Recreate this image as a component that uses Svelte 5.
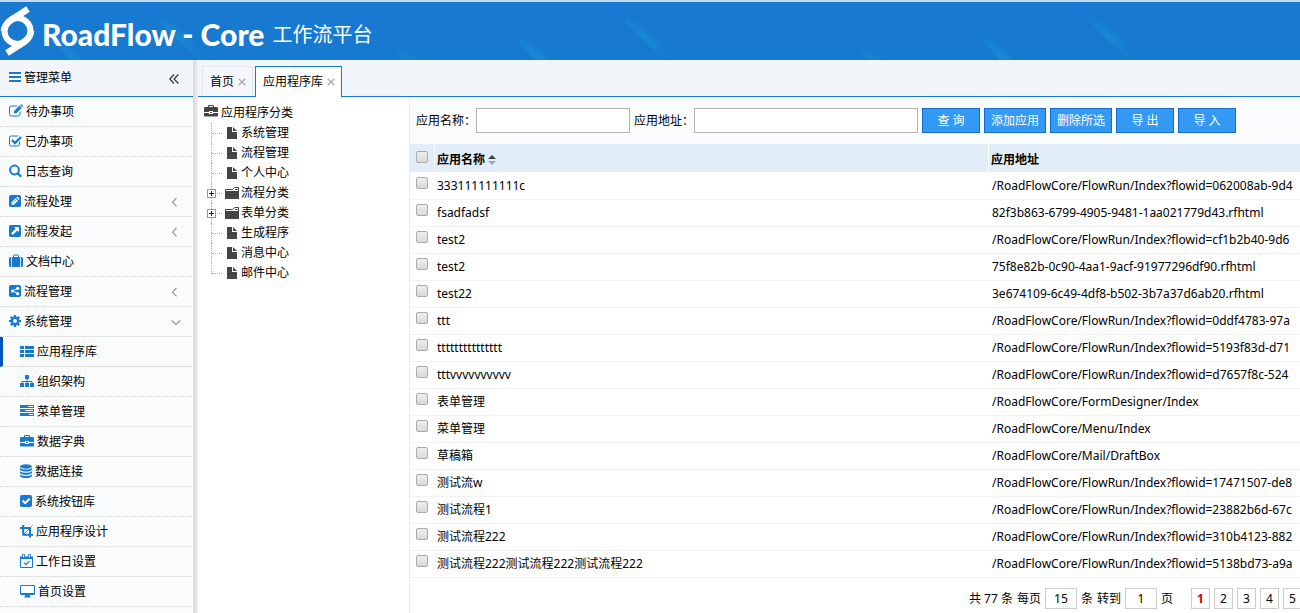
<script lang="ts">
  interface MenuItem {
    label: string;
    icon: string;
    width: number;
    arrow?: 'left' | 'down';
    child?: boolean;
    active?: boolean;
  }

  interface TreeNode {
    label: string;
    folder?: boolean;
  }

  interface AppRow {
    name: string;
    address: string;
  }

  const menu: MenuItem[] = [
    { label: '待办事项', icon: 'edit', width: 14 },
    { label: '已办事项', icon: 'checkOutline', width: 13 },
    { label: '日志查询', icon: 'search', width: 13 },
    { label: '流程处理', icon: 'pencilSquare', width: 12, arrow: 'left' },
    { label: '流程发起', icon: 'arrowSquare', width: 12, arrow: 'left' },
    { label: '文档中心', icon: 'suitcase', width: 14 },
    { label: '流程管理', icon: 'shareSquare', width: 12, arrow: 'left' },
    { label: '系统管理', icon: 'cog', width: 12, arrow: 'down' },
    { label: '应用程序库', icon: 'list', width: 14, child: true, active: true },
    { label: '组织架构', icon: 'sitemap', width: 14, child: true },
    { label: '菜单管理', icon: 'server', width: 14, child: true },
    { label: '数据字典', icon: 'briefcase', width: 14, child: true },
    { label: '数据连接', icon: 'database', width: 12, child: true },
    { label: '系统按钮库', icon: 'checkSquare', width: 12, child: true },
    { label: '应用程序设计', icon: 'crop', width: 13, child: true },
    { label: '工作日设置', icon: 'calendar', width: 13, child: true },
    { label: '首页设置', icon: 'desktop', width: 15, child: true }
  ];

  const tree: TreeNode[] = [
    { label: '系统管理' },
    { label: '流程管理' },
    { label: '个人中心' },
    { label: '流程分类', folder: true },
    { label: '表单分类', folder: true },
    { label: '生成程序' },
    { label: '消息中心' },
    { label: '邮件中心' }
  ];

  const rows: AppRow[] = [
    { name: '333111111111c', address: '/RoadFlowCore/FlowRun/Index?flowid=062008ab-9d4' },
    { name: 'fsadfadsf', address: '82f3b863-6799-4905-9481-1aa021779d43.rfhtml' },
    { name: 'test2', address: '/RoadFlowCore/FlowRun/Index?flowid=cf1b2b40-9d6' },
    { name: 'test2', address: '75f8e82b-0c90-4aa1-9acf-91977296df90.rfhtml' },
    { name: 'test22', address: '3e674109-6c49-4df8-b502-3b7a37d6ab20.rfhtml' },
    { name: 'ttt', address: '/RoadFlowCore/FlowRun/Index?flowid=0ddf4783-97a' },
    { name: 'ttttttttttttttt', address: '/RoadFlowCore/FlowRun/Index?flowid=5193f83d-d71' },
    { name: 'tttvvvvvvvvvv', address: '/RoadFlowCore/FlowRun/Index?flowid=d7657f8c-524' },
    { name: '表单管理', address: '/RoadFlowCore/FormDesigner/Index' },
    { name: '菜单管理', address: '/RoadFlowCore/Menu/Index' },
    { name: '草稿箱', address: '/RoadFlowCore/Mail/DraftBox' },
    { name: '测试流w', address: '/RoadFlowCore/FlowRun/Index?flowid=17471507-de8' },
    { name: '测试流程1', address: '/RoadFlowCore/FlowRun/Index?flowid=23882b6d-67c' },
    { name: '测试流程222', address: '/RoadFlowCore/FlowRun/Index?flowid=310b4123-882' },
    { name: '测试流程222测试流程222测试流程222', address: '/RoadFlowCore/FlowRun/Index?flowid=5138bd73-a9a' }
  ];

  const pages = [1, 2, 3, 4, 5];
  const streakOffsets = [147, 612, 1077, 1542];

  let checked = $state<boolean[]>(rows.map(() => false));
  let currentPage = $state(1);
  let pageSize = $state('15');
  let gotoPage = $state('1');
  let nameFilter = $state('');
  let addressFilter = $state('');

  let allChecked = $derived(checked.every(Boolean));

  function toggleAll() {
    const next = !allChecked;
    checked = rows.map(() => next);
  }
</script>

{#snippet icon(name: string, width: number)}
  <svg class="icon" {width} height="14" viewBox="0 0 {width} 14" aria-hidden="true">
    {#if name === 'edit'}
      <path d="M11 8v2.300a1.700 1.700 0 0 1-1.700 1.700H2.200A1.700 1.700 0 0 1 .5 10.300V3.700A1.700 1.700 0 0 1 2.200 2h6" fill="none" stroke="currentColor" />
      <path d="M5 7l5.500-5.500 2.300 2.300L7.300 9.300H5zM11.100 1l.6-.6q.5-.4 1 0l1.100 1.100q.4.500 0 1l-.5.600z" fill="currentColor" />
    {:else if name === 'checkOutline'}
      <path d="M10.500 7.500v2.800a1.700 1.700 0 0 1-1.700 1.700H2.200a1.700 1.700 0 0 1-1.700-1.700V3.700A1.700 1.700 0 0 1 2.200 2h7" fill="none" stroke="currentColor" />
      <path d="M3 6l3 3 6-6" fill="none" stroke="currentColor" stroke-width="2.300" />
    {:else if name === 'search'}
      <circle cx="5.500" cy="6" r="4.400" fill="none" stroke="currentColor" stroke-width="2" />
      <path d="M8.700 9.200l3.500 3.500" stroke="currentColor" stroke-width="2.200" />
    {:else if name === 'pencilSquare'}
      <rect y="1" width="12" height="12" rx="1.800" fill="currentColor" />
      <path d="M2.500 10.800V8.300l4-4L9 6.800l-4 4zM7.200 3.600l1-1 2.400 2.400-1 1z" fill="#fff" />
      <path d="M4 8.700l3-3" stroke="currentColor" stroke-width=".7" />
    {:else if name === 'arrowSquare'}
      <rect y="1" width="12" height="12" rx="1.800" fill="currentColor" />
      <path d="M5 3h5v5L8.300 6.400l-4.500 4.500-1.700-1.700 4.500-4.500z" fill="#fff" />
    {:else if name === 'suitcase'}
      <path d="M4.500 3V1.700q0-.7.700-.7h3.600q.7 0 .7.700V3" fill="none" stroke="currentColor" />
      <path d="M3 3h8v10H3zM2.200 3v10H1.500Q0 13 0 11.500v-7Q0 3 1.500 3zM11.800 3v10h.7q1.500 0 1.500-1.500v-7Q14 3 12.500 3z" fill="currentColor" />
    {:else if name === 'shareSquare'}
      <rect y="1" width="12" height="12" rx="1.800" fill="currentColor" />
      <path d="M8.500 4.500L3.500 7l5 2.500" fill="none" stroke="#fff" />
      <circle cx="8.700" cy="4.300" r="1.600" fill="#fff" />
      <circle cx="3.500" cy="7" r="1.600" fill="#fff" />
      <circle cx="8.700" cy="9.700" r="1.600" fill="#fff" />
    {:else if name === 'cog'}
      <circle cx="6" cy="7" r="3.300" fill="none" stroke="currentColor" stroke-width="2.600" />
      <path d="M6 1v2M6 11v2M0 7h2M10 7h2M1.800 2.800l1.400 1.400M8.800 9.800l1.400 1.400M1.800 11.200l1.400-1.400M8.800 4.200l1.400-1.400" stroke="currentColor" stroke-width="2.200" />
    {:else if name === 'list'}
      <path d="M0 2h4v3H0zM5 2h9v3H5zM0 6h4v3H0zM5 6h9v3H5zM0 10h4v3H0zM5 10h9v3H5z" fill="currentColor" />
    {:else if name === 'sitemap'}
      <path d="M5 1h4v4H5zM0 9h4v4H0zM5 9h4v4H5zM10 9h4v4h-4z" fill="currentColor" />
      <path d="M7 4v6M2 9.500V7.500h10v2" fill="none" stroke="currentColor" />
    {:else if name === 'server'}
      <path d="M0 1h14v3H0zM0 5h14v3H0zM0 9h14v3H0z" fill="currentColor" />
      <path d="M8 2.500h5M5 6.500h8M9 10.500h4" stroke="#fff" />
    {:else if name === 'briefcase'}
      <path d="M4.500 3V1.500h5V3" fill="none" stroke="currentColor" />
      <path d="M1.300 3h11.400Q14 3 14 4.300V8H9V7H5v1H0V4.300Q0 3 1.300 3zM0 9h5v1h4V9h5v2.700q0 .800-1.300.800H1.300Q0 12.500 0 11.700zM6 8h2v1H6z" fill="currentColor" />
    {:else if name === 'database'}
      <ellipse cx="6" cy="2.500" rx="6" ry="2.200" fill="currentColor" />
      <path d="M0 4q2 1.500 6 1.500T12 4v1.500Q10.500 7.500 6 7.500T0 5.500zM0 7.200q2 1.500 6 1.500t6-1.500v1.500q-1.500 2-6 2t-6-2zM0 10.400q2 1.500 6 1.500t6-1.500V12q-1.500 2-6 2t-6-2z" fill="currentColor" />
    {:else if name === 'checkSquare'}
      <rect y="1" width="12" height="12" rx="1.800" fill="currentColor" />
      <path d="M2.500 6.500l2.700 2.700 4.500-4.500" fill="none" stroke="#fff" stroke-width="2" />
    {:else if name === 'crop'}
      <path d="M3.200 1v9.800H13M0 4h10v9.500" fill="none" stroke="currentColor" stroke-width="2" />
      <path d="M4 10l8.500-8.500" stroke="currentColor" stroke-width=".8" />
    {:else if name === 'calendar'}
      <path d="M.5 3.500h12v10H.5z" fill="none" stroke="currentColor" />
      <path d="M0 2.500h13V5H0z" fill="currentColor" />
      <path d="M3.500 0v4M9.500 0v4" stroke="currentColor" stroke-width="2.600" />
      <path d="M3.500 .7v2.600M9.500 .7v2.600" stroke="#fff" stroke-width="1" />
      <path d="M4 8.700l2 2 3.500-3.500" fill="none" stroke="currentColor" stroke-width="1.200" />
    {:else if name === 'desktop'}
      <path d="M1.200 1h12.600Q15 1 15 2.200v7.600q0 1.200-1.200 1.200H9.500l.5 1.300h.5V13.500h-6v-1.200H5L5.500 11H1.200Q0 11 0 9.800V2.200Q0 1 1.200 1z" fill="currentColor" />
      <path d="M1 2h13v7H1z" fill="#fff" />
    {:else if name === 'bars'}
      <path d="M0 2h12v2H0zM0 6h12v2H0zM0 10h12v2H0z" fill="currentColor" />
    {:else if name === 'file'}
      <path d="M0 1h5v5h5v7H0zM6 1l4 4H6z" fill="currentColor" />
    {:else if name === 'folder'}
      <path d="M.5 12V3.500h7l2-2h4V12" fill="none" stroke="currentColor" />
      <path d="M0 5h14v8H0z" fill="currentColor" />
      <path d="M10 3.500h2.500" stroke="currentColor" />
    {/if}
  </svg>
{/snippet}

<div class="app">
  <header class="banner">
    <svg class="streaks" width="100%" height="58" aria-hidden="true">
      <defs>
        <linearGradient id="streak" gradientUnits="userSpaceOnUse" x1="36" y1="34" x2="48" y2="24">
          <stop offset="0" stop-color="#1c9cdc" stop-opacity="0.5" />
          <stop offset="1" stop-color="#1c9cdc" stop-opacity="0" />
        </linearGradient>
        <linearGradient id="fade" x1="0" y1="0" x2="0" y2="1">
          <stop offset="0" stop-color="#fff" stop-opacity="0" />
          <stop offset="0.5" stop-color="#fff" />
          <stop offset="1" stop-color="#fff" stop-opacity="0.2" />
        </linearGradient>
        <mask id="fadeMask" maskUnits="userSpaceOnUse" x="0" y="8" width="90" height="54">
          <rect y="8" width="90" height="54" fill="url(#fade)" />
        </mask>
        <g id="streakShape" mask="url(#fadeMask)">
          <path d="M10 10H22L78 60H62z" fill="url(#streak)" />
        </g>
      </defs>
      {#each streakOffsets as x}
        <g transform="translate({x - 8} 0)">
          <use href="#streakShape" />
          <use href="#streakShape" x="-107" y="20" />
          <use href="#streakShape" x="-227" y="32" />
        </g>
      {/each}
    </svg>
    <svg class="logo" width="36" height="54" viewBox="0 4 36 54" aria-hidden="true">
      <g fill="none" stroke="#fff">
        <circle cx="17.500" cy="31" r="13" stroke-width="6" />
        <path d="M28 9L11 20C6 24 4 27 4 31M7 53L24 42C29 38 31 35 31 31" stroke-width="6.500" />
      </g>
    </svg>
    <h1 class="title">
      <span class="brand">RoadFlow - Core</span>
      <span class="product">工作流平台</span>
    </h1>
  </header>

  <div class="body">
    <aside class="sidebar">
      <div class="sidebar-head">
        <span class="accent">{@render icon('bars', 12)}</span>
        <span>管理菜单</span>
        <button class="collapse" aria-label="收起菜单">
          <svg width="10" height="10" viewBox="0 0 10 10" aria-hidden="true">
            <path d="M5 .5L.8 5 5 9.500M9.300 .5L5.100 5l4.200 4.500" fill="none" stroke="#333" stroke-width="1.200" />
          </svg>
        </button>
      </div>
      <nav>
        {#each menu as item}
          <a href="#menu" class="menu-item" class:child={item.child} class:active={item.active}>
            <span class="accent">{@render icon(item.icon, item.width)}</span>
            <span>{item.label}</span>
            {#if item.arrow}
              <svg class="arrow" width="10" height="10" viewBox="0 0 10 10" aria-hidden="true">
                {#if item.arrow === 'left'}
                  <path d="M5.500 1L1.500 5.200l4 4.200" fill="none" stroke="#999" stroke-width="1.200" />
                {:else}
                  <path d="M.7 3.500L5 7.500l4.300-4" fill="none" stroke="#999" stroke-width="1.200" />
                {/if}
              </svg>
            {/if}
          </a>
        {/each}
      </nav>
    </aside>
    <div class="splitter"></div>

    <main class="workspace">
      <div class="tabs">
        <div class="tab">
          <span>首页</span>
          <button class="tab-close" aria-label="关闭首页">
            <svg width="8" height="8" viewBox="0 0 8 8" aria-hidden="true"><path d="M.7 .7l6.600 6.600M7.300 .7L.7 7.300" stroke="#aaa" stroke-width="1.300" /></svg>
          </button>
        </div>
        <div class="tab current">
          <span>应用程序库</span>
          <button class="tab-close" aria-label="关闭应用程序库">
            <svg width="8" height="8" viewBox="0 0 8 8" aria-hidden="true"><path d="M.7 .7l6.600 6.600M7.300 .7L.7 7.300" stroke="#aaa" stroke-width="1.300" /></svg>
          </button>
        </div>
      </div>

      <div class="content">
        <section class="tree">
          <div class="tree-root">
            {@render icon('briefcase', 14)}
            <span>应用程序分类</span>
          </div>
          <ul>
            {#each tree as node}
              <li>
                <span class="branch">
                  {#if node.folder}
                    <svg class="plus" width="9" height="9" viewBox="0 0 9 9" aria-hidden="true">
                      <rect x=".5" y=".5" width="8" height="8" fill="#fff" stroke="#999" />
                      <path d="M2 4.500h5M4.500 2v5" stroke="#222" />
                    </svg>
                  {/if}
                </span>
                <span class="node-icon">{@render icon(node.folder ? 'folder' : 'file', node.folder ? 14 : 10)}</span>
                <span>{node.label}</span>
              </li>
            {/each}
          </ul>
        </section>

        <section class="list">
          <form class="toolbar" onsubmit={(e) => e.preventDefault()}>
            <label for="app-name">应用名称：</label>
            <input id="app-name" class="field name-field" type="text" bind:value={nameFilter} />
            <label for="app-address">应用地址：</label>
            <input id="app-address" class="field address-field" type="text" bind:value={addressFilter} />
            <button class="btn" type="submit">查 询</button>
            <button class="btn" type="button">添加应用</button>
            <button class="btn" type="button">删除所选</button>
            <button class="btn" type="button">导 出</button>
            <button class="btn" type="button">导 入</button>
          </form>

          <table>
            <thead>
              <tr>
                <th class="check">
                  <input type="checkbox" aria-label="全选" checked={allChecked} onchange={toggleAll} />
                </th>
                <th class="name">
                  应用名称
                  <svg class="sort" width="8" height="10" viewBox="0 0 8 10" aria-hidden="true">
                    <path d="M0 4L4 0l4 4z" fill="#444" />
                    <path d="M0 6h8L4 10z" fill="#9aa5b0" />
                  </svg>
                </th>
                <th>应用地址</th>
              </tr>
            </thead>
            <tbody>
              {#each rows as row, i}
                <tr>
                  <td class="check"><input type="checkbox" aria-label={row.name} bind:checked={checked[i]} /></td>
                  <td>{row.name}</td>
                  <td class="address">{row.address}</td>
                </tr>
              {/each}
            </tbody>
          </table>

          <div class="pager">
            <span>共 77 条</span>
            <label for="page-size">每页</label>
            <input id="page-size" type="text" bind:value={pageSize} />
            <span>条</span>
            <label for="goto-page">转到</label>
            <input id="goto-page" type="text" bind:value={gotoPage} />
            <span>页</span>
            <div class="pages">
              {#each pages as page}
                <button class:current={page === currentPage} onclick={() => (currentPage = page)}>{page}</button>
              {/each}
            </div>
          </div>
        </section>
      </div>
    </main>
  </div>
</div>

<style>
  :global(body) {
    margin: 0;
    overflow: hidden;
  }

  .app {
    display: flex;
    flex-direction: column;
    height: 100vh;
    overflow: hidden;
    background: #fff;
    color: #000;
    font-family: 'Noto Sans', 'Noto Sans CJK SC', sans-serif;
    font-size: 12px;
    line-height: 18px;
  }

  .app * {
    box-sizing: border-box;
  }

  button,
  input {
    font: inherit;
    color: inherit;
  }

  svg {
    display: block;
    flex: none;
  }

  /* Banner */
  .banner {
    position: relative;
    display: flex;
    align-items: center;
    flex: none;
    height: 60px;
    border-top: 2px solid #c3daf5;
    background: #1779d0;
    color: #fff;
  }

  .streaks {
    position: absolute;
    inset: 0;
  }

  .logo {
    position: relative;
  }

  .title {
    position: relative;
    display: flex;
    align-items: center;
    gap: 8px;
    margin: 6px 0 0 6px;
    line-height: 32px;
    white-space: nowrap;
  }

  .brand {
    font-family: Lato, sans-serif;
    font-size: 30px;
    font-weight: 900;
  }

  .product {
    padding-top: 2px;
    font-size: 20px;
    font-weight: 400;
  }

  .body {
    display: flex;
    flex: 1;
    min-height: 0;
  }

  /* Sidebar */
  .sidebar {
    flex: none;
    width: 193px;
    background: #fafbfd;
    overflow: hidden;
  }

  .sidebar-head {
    display: flex;
    align-items: center;
    gap: 3px;
    height: 37px;
    padding: 0 14px 1px 9px;
    border-bottom: 1px solid #1779d0;
    background: #f2f6fb;
  }

  .accent {
    padding-bottom: 2px;
    color: #1779d0;
  }

  .collapse {
    margin-left: auto;
    padding: 3px 0 0;
    border: 0;
    background: none;
    cursor: pointer;
  }

  .menu-item {
    display: flex;
    align-items: center;
    gap: 3px;
    height: 30px;
    margin-right: 1px;
    padding: 0 11px 0 9px;
    border-bottom: 1px dotted #d4d4d4;
    color: #000;
    text-decoration: none;
  }

  .menu-item.child {
    padding-left: 20px;
  }

  .menu-item.active {
    padding-left: 17px;
    border-left: 3px solid #0055c4;
    border-bottom: 1px solid #ddd;
  }

  .arrow {
    margin-left: auto;
  }

  .splitter {
    flex: none;
    width: 5px;
    background: linear-gradient(to right, #d8d8d8, #f0f0f0);
  }

  /* Tabs */
  .workspace {
    display: flex;
    flex-direction: column;
    flex: 1;
    min-width: 0;
  }

  .tabs {
    display: flex;
    align-items: flex-end;
    gap: 2px;
    flex: none;
    height: 37px;
    padding-left: 4px;
    border-bottom: 1px solid #1779d0;
    background: #f2f6fb;
  }

  .tab {
    display: flex;
    align-items: center;
    gap: 4px;
    height: 30px;
    padding: 0 6px 0 7px;
    border: 1px solid #e0e7f0;
    border-bottom: 0;
    background: #f5f7fa;
  }

  .tab.current {
    height: 31px;
    margin-bottom: -1px;
    border-color: #1779d0;
    background: #fff;
  }

  .tab-close {
    padding: 0;
    border: 0;
    background: none;
    cursor: pointer;
  }

  .content {
    display: flex;
    flex: 1;
    min-height: 0;
  }

  /* Category tree */
  .tree {
    flex: none;
    width: 211px;
    padding: 6px 0 0 6px;
  }

  .tree-root {
    display: flex;
    align-items: center;
    gap: 3px;
    height: 20px;
  }

  .tree .icon {
    color: #444;
  }

  .tree-root .icon {
    margin-bottom: 4px;
  }

  ul {
    margin: 0;
    padding: 0 0 0 7px;
    list-style: none;
  }

  li {
    display: flex;
    align-items: center;
    height: 20px;
  }

  .branch {
    position: relative;
    align-self: stretch;
    width: 14px;
    border-left: 1px dotted #aaa;
  }

  .branch::before {
    content: '';
    position: absolute;
    top: 10px;
    left: 0;
    width: 10px;
    border-top: 1px dotted #aaa;
  }

  li:last-child .branch {
    align-self: flex-start;
    height: 11px;
  }

  .plus {
    position: absolute;
    top: 6px;
    left: -5px;
  }

  .node-icon {
    display: flex;
    justify-content: center;
    width: 14px;
    margin-right: 2px;
  }

  /* Application list */
  .list {
    flex: 1;
    min-width: 0;
    border-left: 1px solid #e8eef5;
    overflow: hidden;
  }

  .toolbar {
    display: flex;
    align-items: center;
    gap: 4px;
    height: 47px;
    padding-left: 6px;
    background: #fafbfd;
    white-space: nowrap;
  }

  .toolbar label {
    margin-right: -4px;
  }

  .field {
    height: 25px;
    padding: 0 4px;
    border: 1px solid #b3b3b3;
    background: #fff;
    outline: none;
  }

  .name-field {
    width: 154px;
  }

  .address-field {
    width: 224px;
  }

  .btn {
    flex: none;
    height: 25px;
    min-width: 58px;
    padding: 0 6px;
    border: 1px solid #146cce;
    background: #3399f3;
    color: #fff;
    line-height: 23px;
    cursor: pointer;
  }

  .btn:hover {
    background: #2288e6;
  }

  table {
    width: 100%;
    table-layout: fixed;
    border-collapse: separate;
    border-spacing: 0;
  }

  th,
  td {
    height: 27px;
    padding: 0 3px;
    border-bottom: 1px solid #f2f2f2;
    text-align: left;
    white-space: nowrap;
    overflow: hidden;
  }

  td.address {
    padding-left: 4px;
  }

  th {
    height: 29px;
    padding: 4px 3px 0 2px;
    border-bottom-color: #fff;
    border-left: 1px solid #fff;
    background: #e1edf9;
  }

  th.check,
  td.check {
    width: 24px;
    padding: 4px 0 0 6px;
    border-left: 0;
    vertical-align: top;
  }

  th.check {
    padding-top: 7px;
  }

  th.name {
    width: 554px;
  }

  .sort {
    display: inline-block;
    vertical-align: -1px;
  }

  input[type='checkbox'] {
    display: block;
    appearance: none;
    width: 12px;
    height: 12px;
    margin: 0;
    border: 1px solid #aaa;
    border-radius: 2px;
    background: linear-gradient(#eee, #d9d9d9);
  }

  input[type='checkbox']:checked {
    background: #3399f3;
  }

  /* Pager */
  .pager {
    display: flex;
    align-items: center;
    gap: 4px;
    padding: 10px 0 0 559px;
    white-space: nowrap;
  }

  .pager input {
    flex: none;
    width: 32px;
    height: 21px;
    padding: 0;
    border: 1px solid #ccc;
    background: #fff;
    text-align: center;
  }

  .pages {
    display: flex;
    gap: 4px;
    margin-left: 14px;
  }

  .pages button {
    flex: none;
    width: 19px;
    height: 21px;
    padding: 0;
    border: 1px solid #ccc;
    background: #fff;
    line-height: 18px;
    cursor: pointer;
  }

  .pages button.current {
    color: #c00;
    font-weight: 700;
  }
</style>
